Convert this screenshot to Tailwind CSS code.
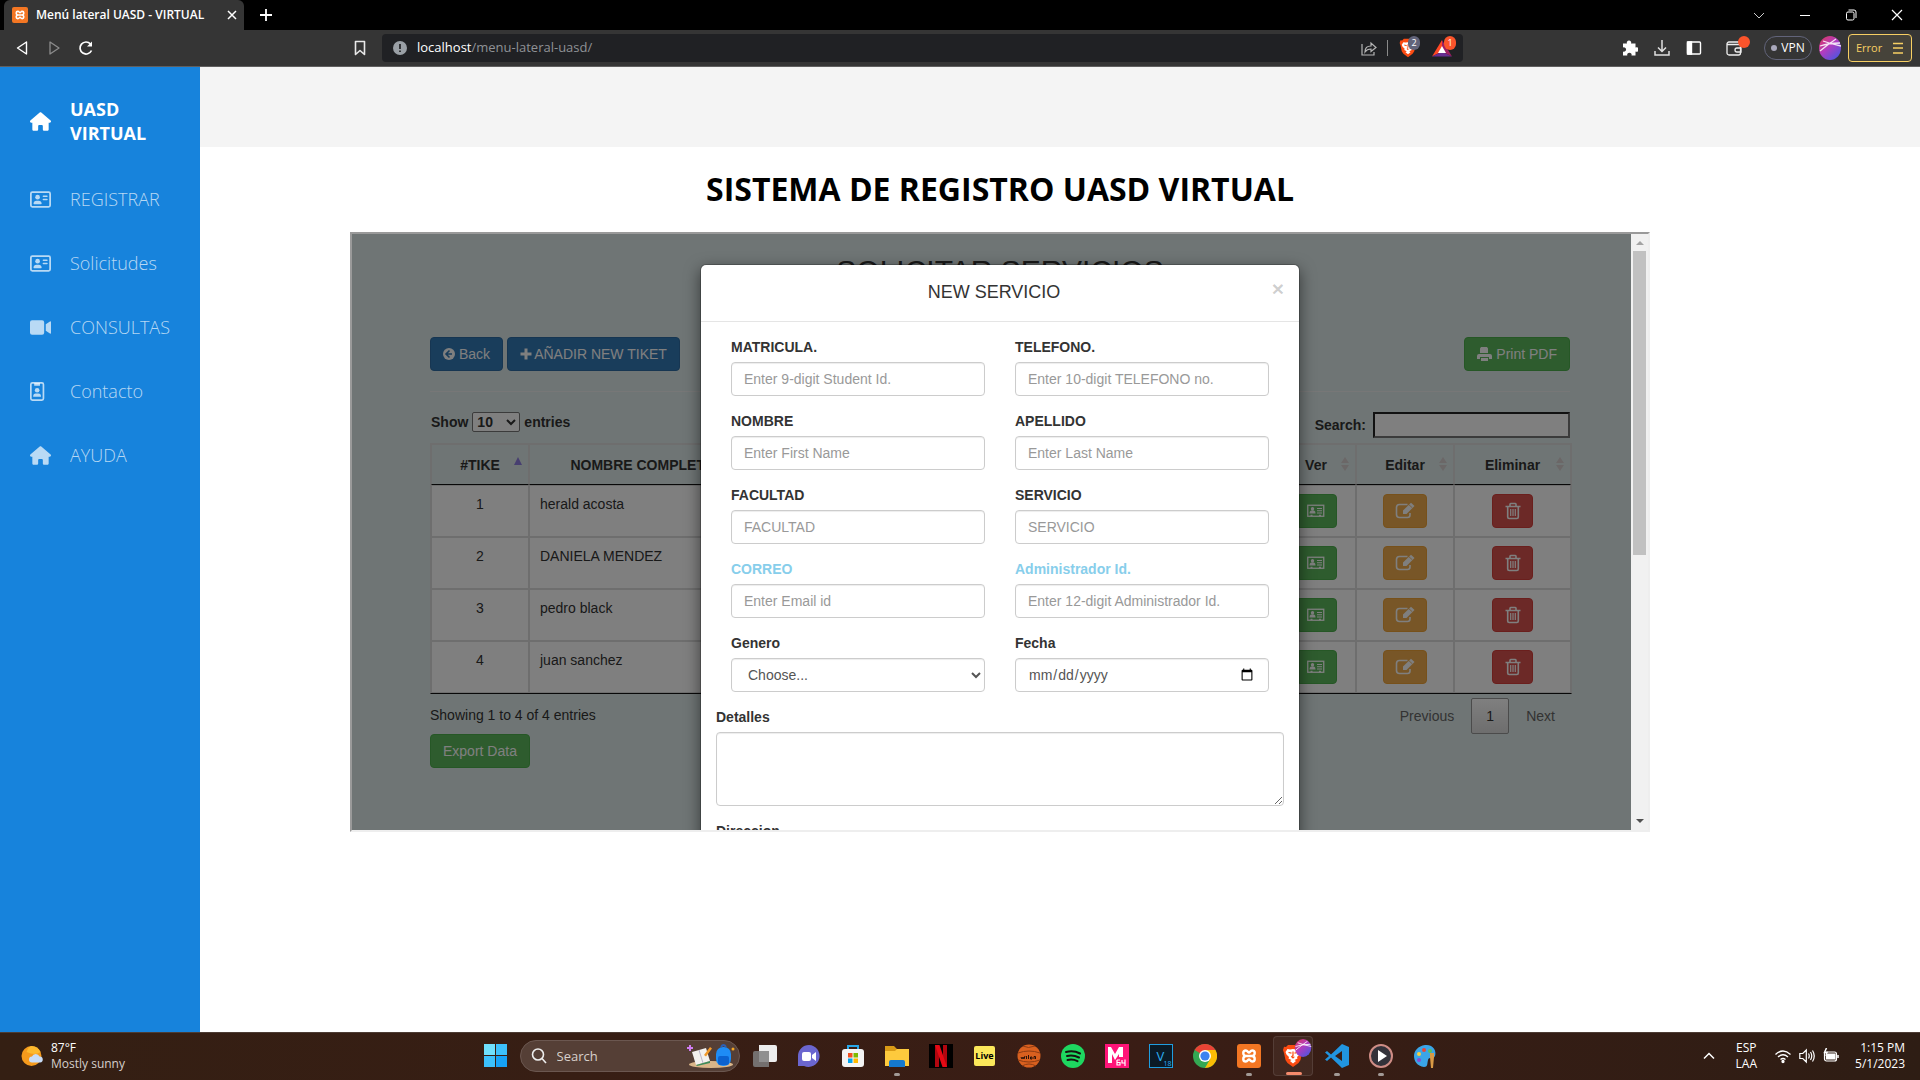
<!DOCTYPE html>
<html lang="es">
<head>
<meta charset="utf-8">
<meta name="viewport" content="width=device-width, initial-scale=1">
<title>Menú lateral UASD - VIRTUAL</title>
<script src="https://cdn.jsdelivr.net/npm/@tailwindcss/browser@4"></script>
</head>
<body class="flex min-h-screen flex-col bg-white font-['Open_Sans',sans-serif]">

<!-- Shared icon shapes -->
<svg class="absolute size-0" aria-hidden="true">
  <defs><linearGradient id="orbg" x1="0" y1="0" x2=".8" y2="1"><stop offset="0" stop-color="#e0385a"/><stop offset=".5" stop-color="#b13cc0"/><stop offset="1" stop-color="#4b56e0"/></linearGradient></defs>
  <symbol id="house" viewBox="0 0 576 512"><path fill="currentColor" d="M575.8 255.5c0 18-15 32.1-32 32.1h-32l.7 160.2c0 2.7-.2 5.4-.5 8.1V472c0 22.100-17.900 40-40 40H456c-1.100 0-2.200 0-3.300-.1c-1.400 .1-2.800 .1-4.200 .1H416 392c-22.100 0-40-17.900-40-40V448 384c0-17.700-14.300-32-32-32H256c-17.700 0-32 14.300-32 32v64 24c0 22.100-17.900 40-40 40H160 128.100c-1.500 0-3-.1-4.500-.2c-1.200 .1-2.400 .2-3.600 .2H104c-22.100 0-40-17.900-40-40V360c0-.9 0-1.900 .1-2.800V287.600H32c-18 0-32-14-32-32.100c0-9 3-17 10-24L266.400 8c7-7 15-8 22-8s15 2 21 7L564.800 231.500c8 7 12 15 11 24z"/></symbol>
  <symbol id="idcard" viewBox="0 0 576 512"><rect x="24" y="56" width="528" height="400" rx="40" fill="none" stroke="currentColor" stroke-width="48"/><circle cx="208" cy="192" r="64" fill="currentColor"/><path fill="currentColor" d="M96 364c0-44 36-76 80-76h64c44 0 80 32 80 76 0 10-8 20-18 20H114c-10 0-18-10-18-20zM368 144h96a22 22 0 0 1 0 44h-96a22 22 0 0 1 0-44zM368 232h96a22 22 0 0 1 0 44h-96a22 22 0 0 1 0-44z"/></symbol>
  <symbol id="xampp" viewBox="0 0 24 24"><rect width="24" height="24" rx="3" fill="#f37623"/><path d="M8.500 12c-3-1-3-5.500.3-5.500 2 0 2 2 3.200 2s1.200-2 3.200-2c3.300 0 3.300 4.500.3 5.500 3 1 3 5.500-.3 5.500-2 0-2-2-3.200-2s-1.200 2-3.200 2c-3.300 0-3.300-4.500-.3-5.500zM9 12h6" fill="none" stroke="#fff" stroke-width="2.400" stroke-linejoin="round"/></symbol>
  <symbol id="brave" viewBox="0 0 24 24"><path d="M7 1h10l2 2 2-.2 1 3.200-1 3-1.500 7-2 3L12 23l-5.500-4-2-3L3 9 2 6l1-3.200L5 3z" fill="#fb4b12"/><path d="M6.500 5l2.500.5L12 5l3 .5 2.500-.5 2 3-1 2.500L16 13l.5 1.500-3 1.500 1.500 1-3 2.500L9 17l1.500-1-3-1.500L8 13l-2.500-2.500-1-2.500z" fill="#fff"/><path d="M7.500 8.500l3 .7M16.500 8.500l-3 .7M12 7.500v4l-1.300 1.200L12 14l1.300-1.300" fill="none" stroke="#fb4b12" stroke-width="1.200"/></symbol>
  <symbol id="orb" viewBox="0 0 22 24"><ellipse cx="11" cy="12" rx="11" ry="12" fill="url(#orbg)"/><path d="M1 15Q8 9 17 3M4 5q8 3 18 5M1 10q9-3 20-3" stroke="#fff" stroke-width="1.300" fill="none" opacity=".85"/></symbol>
  <symbol id="vcard" viewBox="0 0 18 14"><rect x=".75" y="1.250" width="16" height="11" fill="none" stroke="currentColor" stroke-width="1.300"/><circle cx="5.500" cy="4.800" r="1.700" fill="currentColor"/><path d="M2.500 9.500q0-3.200 3-3.200t3 3.200zM10 4h5v1h-5zM10 6.300h5v1h-5zM10 8.600h5v1h-5zM3.500 10.800h2v1.500h-2zM12 10.800h2v1.500h-2z" fill="currentColor"/></symbol>
  <symbol id="edit" viewBox="0 0 20 18"><path d="M12.500 2.500H4.500Q1.500 2.500 1.500 5.500v7Q1.500 15.500 4.500 15.500h8q2.500 0 2.500-2.500v-2" fill="none" stroke="currentColor" stroke-width="1.600"/><path d="M8 8.500L16 .8l3.500 3.200-8 8H8z" fill="currentColor"/><path d="M14 2.800l3.300 3" stroke="#f0ad4e" stroke-width=".8"/></symbol>
  <symbol id="trash" viewBox="0 0 16 18"><path d="M.5 4.500h15M5 4V2.200q0-.7.7-.7h4.600q.7 0 .7.700V4M2.700 4.500V15q0 1.500 1.500 1.500h7.600q1.500 0 1.500-1.500V4.500" fill="none" stroke="currentColor" stroke-width="1.600"/><path d="M5.700 7v7M8 7v7M10.300 7v7" stroke="currentColor" stroke-width="1.200"/></symbol>
  <symbol id="sort" viewBox="0 0 8 14"><path d="M0 6l4-6 4 6zM0 8h8l-4 6z" fill="currentColor"/></symbol>
</svg>

<!-- Browser window -->
<header class="text-white">
  <div class="flex h-[30px] items-center bg-black pl-1">
    <div class="flex h-full w-60 items-center rounded-t-md bg-[#353535] pr-1.5 pl-2">
      <svg class="size-4"><use href="#xampp"/></svg>
      <span class="ml-2 flex-1 text-xs font-semibold whitespace-nowrap">Menú lateral UASD - VIRTUAL</span>
      <button class="grid size-3" aria-label="Cerrar pestaña"><svg viewBox="0 0 12 12" stroke="#fff" stroke-width="1.500"><path d="M2 2l8 8M10 2l-8 8"/></svg></button>
    </div>
    <button class="ml-4 size-3" aria-label="Nueva pestaña"><svg viewBox="0 0 12 12" stroke="#fff" stroke-width="1.800"><path d="M6 0v12M0 6h12"/></svg></button>
    <div class="ml-auto flex h-full items-center gap-[34px] pr-[17px]">
      <button class="size-3" aria-label="Buscar pestañas"><svg viewBox="0 0 12 12" fill="none" stroke="#ccc"><path d="M1 4l5 5 5-5"/></svg></button>
      <button class="size-3" aria-label="Minimizar"><svg viewBox="0 0 12 12" stroke="#fff"><path d="M1 6.500h10"/></svg></button>
      <button class="size-3" aria-label="Restaurar"><svg viewBox="0 0 12 12" fill="none" stroke="#fff"><rect x="1.500" y="3" width="7.500" height="8" rx="1.500"/><path d="M3.500 1h5.500q2 0 2 2v6"/></svg></button>
      <button class="size-3" aria-label="Cerrar"><svg viewBox="0 0 12 12" stroke="#fff" stroke-width="1.200"><path d="M1 1l10 10M11 1L1 11"/></svg></button>
    </div>
  </div>
  <div class="flex h-[37px] items-center border-b border-[#605f5f] bg-[#353535] pr-2 pl-3.5">
    <nav class="flex gap-4" aria-label="Navegación">
      <button class="size-4" aria-label="Atrás"><svg viewBox="0 0 16 16" fill="none" stroke="#fff" stroke-width="1.400"><path d="M12.500 2v12L3.500 8z" stroke-linejoin="round"/></svg></button>
      <button class="size-4" aria-label="Adelante"><svg viewBox="0 0 16 16" fill="none" stroke="#8c8c8c" stroke-width="1.300"><path d="M4 2v12l9-6z" stroke-linejoin="round"/></svg></button>
      <button class="size-4" aria-label="Recargar"><svg viewBox="0 0 16 16" fill="none" stroke="#fff" stroke-width="1.700"><path d="M13.500 10.500A6 6 0 1 1 12.500 4"/><path d="M14 1.500v5H9z" fill="#fff" stroke="none"/></svg></button>
    </nav>
    <button class="ml-[258px] size-4" aria-label="Marcador"><svg viewBox="0 0 16 16" fill="none" stroke="#e8e8e8" stroke-width="1.600"><path d="M3.500 1.500h9v13L8 10.500l-4.500 4z" stroke-linejoin="round"/></svg></button>
    <div class="ml-3.5 flex h-7 flex-1 items-center rounded bg-[#202124] pr-[11px] pl-[11px]">
      <svg class="size-3.5" viewBox="0 0 14 14"><circle cx="7" cy="7" r="7" fill="#9aa0a6"/><path d="M7 3v5M7 9.500v1.500" stroke="#202124" stroke-width="1.700"/></svg>
      <p class="ml-2.5 flex-1 text-[13px] text-[#8f9296]"><span class="text-white">localhost</span>/menu-lateral-uasd/</p>
      <svg class="size-4" viewBox="0 0 16 16" fill="none" stroke="#b5b5b5" stroke-width="1.200"><path d="M1 4v11h12v-3"/><path d="M4 12q0-6 6-6V3l5 4.500-5 4V9q-4 0-6 3z"/></svg>
      <span class="mx-2.5 h-4 w-px bg-[#8a8a8a]"></span>
      <div class="relative size-5"><svg class="size-5"><use href="#brave"/></svg><span class="absolute -top-0.5 left-2.5 grid h-3.5 w-3 place-items-center rounded-full bg-[#62647a] text-[9px]">2</span></div>
      <div class="relative ml-3.5 size-5"><svg class="size-5" viewBox="0 0 20 20"><path d="M10 2L0 18.500l10-5z" fill="#ff4724"/><path d="M0 18.500h20l-10-5z" fill="#662d91"/><path d="M10 2l10 16.500-10-5z" fill="#9e1f63"/><path d="M10 8l4 7H6z" fill="#fff"/></svg><span class="absolute -top-0.5 left-3 grid h-3.5 w-3 place-items-center rounded-full bg-[#fb542b] text-[9px]">1</span></div>
    </div>
    <div class="ml-[159px] flex items-center">
      <svg class="size-4" viewBox="0 0 16 16"><path d="M1 3.500h4a2.200 2.200 0 1 1 4 0h4.500v4a2.300 2.300 0 1 1 0 4V15.500H9.500a2.200 2.200 0 1 0-4.200 0H1v-4a2.200 2.200 0 1 0 0-4z" fill="#fff"/></svg>
      <svg class="ml-4 size-4" viewBox="0 0 16 16" fill="none" stroke="#e0e0e0" stroke-width="1.500"><path d="M8 0v11M4 7.500l4 4 4-4M1 11v4h14v-4"/></svg>
      <svg class="ml-4 size-4" viewBox="0 0 16 16" fill="none" stroke="#fff" stroke-width="1.400"><rect x="1.500" y="2" width="13" height="12" rx="1"/><path d="M1.500 2h4v12h-4z" fill="#fff"/></svg>
      <div class="relative ml-6 size-4"><svg viewBox="0 0 16 16" fill="none" stroke="#eee" stroke-width="1.300"><rect x="1" y="2" width="13.500" height="13" rx="2"/><path d="M1 4.500h13M15 8h-4a2 2 0 0 0 0 4h4z"/></svg><span class="absolute -top-1 left-3 size-3 rounded-full bg-[#fb542b]"></span></div>
      <button class="ml-[22px] flex h-6 w-12 items-center justify-center gap-1 rounded-full border border-[#62647a] text-xs"><span class="size-1.5 rounded-full bg-[#a9a8bb]"></span>VPN</button>
      <svg class="ml-[7px] h-6 w-[22px]"><use href="#orb"/></svg>
      <button class="ml-[7px] flex h-7 w-16 items-center justify-between rounded border border-[#f7cf63] bg-[#46433a] px-[7px] text-[11px] text-[#f7cf63]">Error<svg class="size-3" viewBox="0 0 12 12" stroke="#f7cf63" stroke-width="1.500"><path d="M1 1.500h10M1 6h10M1 11h10"/></svg></button>
    </div>
  </div>
</header>

<!-- Web page -->
<div class="flex flex-1">
  <aside class="w-[200px] shrink-0 bg-[#1783dc] text-lg leading-6 text-white">
    <a href="#" class="flex h-[108px] items-center pl-[30px] font-bold">
      <svg class="mr-[19px] h-[19px] w-[21px]"><use href="#house"/></svg><span class="w-[90px]">UASD VIRTUAL</span>
    </a>
    <nav class="font-light text-white/70">
      <a href="#" class="flex h-12 items-center pl-[30px]"><svg class="mr-[19px] h-[19px] w-[21px]"><use href="#idcard"/></svg>REGISTRAR</a>
      <a href="#" class="mt-4 flex h-12 items-center pl-[30px]"><svg class="mr-[19px] h-[19px] w-[21px]"><use href="#idcard"/></svg>Solicitudes</a>
      <a href="#" class="mt-4 flex h-12 items-center pl-[30px]"><svg class="mr-[19px] h-[19px] w-[21px]" viewBox="0 0 20 18"><path fill="currentColor" d="M2 2h9.500q2 0 2 2v10q0 2-2 2H2q-2 0-2-2V4q0-2 2-2zM15 6l4-2.700q1-.5 1 .7v10q0 1.200-1 .7l-4-2.700z"/></svg>CONSULTAS</a>
      <a href="#" class="mt-4 flex h-12 items-center pl-[30px]"><svg class="mr-[19px] h-[19px] w-[21px]" viewBox="0 0 20 18"><rect x=".8" y=".8" width="12" height="16.400" rx="1.500" fill="none" stroke="currentColor" stroke-width="1.600"/><path fill="currentColor" d="M4 1h5.500v2.500H4zM3 14q0-3 2.500-3h2.500q2.500 0 2.500 3z"/><circle cx="6.800" cy="7.800" r="2.200" fill="currentColor"/></svg>Contacto</a>
      <a href="#" class="mt-4 flex h-12 items-center pl-[30px]"><svg class="mr-[19px] h-[19px] w-[21px]"><use href="#house"/></svg>AYUDA</a>
    </nav>
  </aside>

  <main class="min-w-0 flex-1">
    <div class="h-20 bg-[#f4f4f4]"></div>
    <div class="pr-[120px]">
    <h1 class="mt-5 text-center text-[32px] leading-[44px] font-bold text-black">SISTEMA DE REGISTRO UASD VIRTUAL</h1>

    <section class="relative mx-auto mt-[21px] h-[600px] w-[1300px] max-w-full overflow-hidden border-2 border-t-[#9a9a9a] border-r-[#eee] border-b-[#eee] border-l-[#9a9a9a] bg-[#dfebea] font-['Liberation_Sans',Arial,sans-serif] text-sm leading-5 text-[#333]">
      <div class="mx-auto w-[1140px] pt-5">
        <h2 class="text-center text-[30px] leading-[33px] font-medium">SOLICITAR SERVICIOS</h2>
        <div class="mt-[50px] flex gap-1 text-white">
          <button class="flex h-[34px] items-center gap-1 rounded border border-[#2e6da4] bg-[#337ab7] px-3"><svg class="size-3" viewBox="0 0 12 12"><circle cx="6" cy="6" r="6" fill="currentColor"/><path d="M6.500 2.500L3 6l3.500 3.500M3.500 6H9" fill="none" stroke="#337ab7" stroke-width="1.600"/></svg>Back</button>
          <button class="flex h-[34px] items-center gap-0.5 rounded border border-[#2e6da4] bg-[#337ab7] px-3"><svg class="size-3" viewBox="0 0 12 12"><path d="M6 .5v11M.5 6h11" stroke="currentColor" stroke-width="3"/></svg>AÑADIR NEW TIKET</button>
          <button class="ml-auto flex h-[34px] items-center gap-1 rounded border border-[#4cae4c] bg-[#5cb85c] px-3"><svg class="h-3.5 w-[15px]" viewBox="0 0 15 14" fill="currentColor"><path d="M4 0h6l1 1.500V6H3V1.500zM2 7h11q2 0 2 2v3h-3v-2H3v2H0V9q0-2 2-2zM4 11h7v3H4z"/></svg>Print PDF</button>
        </div>
        <hr class="my-5 border-[#eee]">
        <div class="flex items-start justify-between pl-px font-bold">
          <label class="flex items-center gap-1">Show
            <select class="h-5 w-12 rounded-xs border border-[#767676] bg-white font-bold"><option>10</option></select>
            entries</label>
          <label class="flex items-center gap-[7px]">Search:<input type="search" class="h-[26px] w-[197px] border-2 border-[#767676] border-t-[#222] border-l-[#222] bg-white"></label>
        </div>

        <table class="mt-[5px] w-[calc(100%+2px)] table-fixed border-separate border-spacing-0 border border-[#ddd] border-b-[#111] [&_td]:h-[52px] [&_td]:border [&_td]:border-[#ddd] [&_td]:bg-white [&_td]:p-2 [&_td]:align-top [&_th]:relative [&_th]:h-[41px] [&_th]:border [&_th]:border-[#ddd] [&_th]:border-b-[#111]">
          <colgroup><col class="w-[98px]"><col class="w-[228px]"><col><col class="w-20"><col class="w-[98px]"><col class="w-[117px]"></colgroup>
          <thead><tr>
            <th>#TIKE<svg class="absolute top-3 right-[5px] h-2 w-2.5" viewBox="0 0 10 8"><path d="M1 8l4-8 4 8z" fill="#8f7fe0"/></svg></th>
            <th>NOMBRE COMPLETO</th><th></th>
            <th>Ver<svg class="absolute top-3 right-1.5 h-3.5 w-2 text-[#d6cfcf]"><use href="#sort"/></svg></th>
            <th>Editar<svg class="absolute top-3 right-1.5 h-3.5 w-2 text-[#d6cfcf]"><use href="#sort"/></svg></th>
            <th>Eliminar<svg class="absolute top-3 right-1.5 h-3.5 w-2 text-[#d6cfcf]"><use href="#sort"/></svg></th>
          </tr></thead>
          <tbody>
            <tr><td class="text-center">1</td><td><span class="pl-0.5">herald acosta</span></td><td></td>
              <td><button aria-label="Ver" class="mx-auto grid h-[34px] w-[41px] place-items-center rounded border border-[#4cae4c] bg-[#5cb85c] text-white"><svg class="h-3.5 w-[18px]"><use href="#vcard"/></svg></button></td>
              <td><button aria-label="Editar" class="mx-auto grid h-[34px] w-11 place-items-center rounded border border-[#eea236] bg-[#f0ad4e] text-white"><svg class="h-[18px] w-5"><use href="#edit"/></svg></button></td>
              <td><button aria-label="Eliminar" class="mx-auto grid h-[34px] w-[41px] place-items-center rounded border border-[#d43f3a] bg-[#d9534f] text-white"><svg class="h-[18px] w-4"><use href="#trash"/></svg></button></td></tr>
            <tr><td class="text-center">2</td><td><span class="pl-0.5">DANIELA MENDEZ</span></td><td></td>
              <td><button aria-label="Ver" class="mx-auto grid h-[34px] w-[41px] place-items-center rounded border border-[#4cae4c] bg-[#5cb85c] text-white"><svg class="h-3.5 w-[18px]"><use href="#vcard"/></svg></button></td>
              <td><button aria-label="Editar" class="mx-auto grid h-[34px] w-11 place-items-center rounded border border-[#eea236] bg-[#f0ad4e] text-white"><svg class="h-[18px] w-5"><use href="#edit"/></svg></button></td>
              <td><button aria-label="Eliminar" class="mx-auto grid h-[34px] w-[41px] place-items-center rounded border border-[#d43f3a] bg-[#d9534f] text-white"><svg class="h-[18px] w-4"><use href="#trash"/></svg></button></td></tr>
            <tr><td class="text-center">3</td><td><span class="pl-0.5">pedro black</span></td><td></td>
              <td><button aria-label="Ver" class="mx-auto grid h-[34px] w-[41px] place-items-center rounded border border-[#4cae4c] bg-[#5cb85c] text-white"><svg class="h-3.5 w-[18px]"><use href="#vcard"/></svg></button></td>
              <td><button aria-label="Editar" class="mx-auto grid h-[34px] w-11 place-items-center rounded border border-[#eea236] bg-[#f0ad4e] text-white"><svg class="h-[18px] w-5"><use href="#edit"/></svg></button></td>
              <td><button aria-label="Eliminar" class="mx-auto grid h-[34px] w-[41px] place-items-center rounded border border-[#d43f3a] bg-[#d9534f] text-white"><svg class="h-[18px] w-4"><use href="#trash"/></svg></button></td></tr>
            <tr><td class="text-center">4</td><td><span class="pl-0.5">juan sanchez</span></td><td></td>
              <td><button aria-label="Ver" class="mx-auto grid h-[34px] w-[41px] place-items-center rounded border border-[#4cae4c] bg-[#5cb85c] text-white"><svg class="h-3.5 w-[18px]"><use href="#vcard"/></svg></button></td>
              <td><button aria-label="Editar" class="mx-auto grid h-[34px] w-11 place-items-center rounded border border-[#eea236] bg-[#f0ad4e] text-white"><svg class="h-[18px] w-5"><use href="#edit"/></svg></button></td>
              <td><button aria-label="Eliminar" class="mx-auto grid h-[34px] w-[41px] place-items-center rounded border border-[#d43f3a] bg-[#d9534f] text-white"><svg class="h-[18px] w-4"><use href="#trash"/></svg></button></td></tr>
          </tbody>
        </table>

        <div class="flex h-10 items-start justify-between pt-1">
          <p class="pt-[7px]">Showing 1 to 4 of 4 entries</p>
          <div class="flex gap-0.5 text-[#666]">
            <button class="h-9 px-[15px]">Previous</button>
            <button class="h-9 w-[38px] rounded-xs border border-[#979797] bg-linear-to-b from-white to-[#dcdcdc] text-[#333]">1</button>
            <button class="h-9 px-[15px]">Next</button>
          </div>
        </div>
        <button class="h-[34px] rounded border border-[#4cae4c] bg-[#5cb85c] px-3 text-white">Export Data</button>
      </div>

      <!-- Backdrop and dialog -->
      <div class="absolute inset-0 bg-black/50"></div>
      <div class="absolute inset-x-0 top-[30px] mx-auto w-[600px] rounded-md border border-black/20 bg-white bg-clip-padding shadow-[0_5px_15px_rgba(0,0,0,0.5)]" role="dialog" aria-labelledby="dlg-title">
        <div class="relative h-[57px] border-b border-[#e5e5e5] pt-3.5">
          <h4 id="dlg-title" class="pr-3 text-center text-lg leading-[26px] font-medium">NEW SERVICIO</h4>
          <button class="absolute top-[13px] right-[15px] text-[21px] leading-[21px] font-bold text-black/20" aria-label="Close">×</button>
        </div>
        <form class="p-[15px] [&_input]:h-[34px] [&_input]:w-full [&_input]:rounded [&_input]:border [&_input]:border-[#ccc] [&_input]:px-3 [&_input]:text-[#555] [&_input]:shadow-[inset_0_1px_1px_rgba(0,0,0,0.075)] [&_input]:placeholder:text-[#999] [&_label]:mb-[5px] [&_label]:block [&_label]:font-bold">
          <div class="grid grid-cols-2 gap-x-[30px] gap-y-[15px] px-[15px]">
            <div><label for="f1">MATRICULA.</label><input id="f1" type="text" placeholder="Enter 9-digit Student Id."></div>
            <div><label for="f2">TELEFONO.</label><input id="f2" type="text" placeholder="Enter 10-digit TELEFONO no."></div>
            <div><label for="f3">NOMBRE</label><input id="f3" type="text" placeholder="Enter First Name"></div>
            <div><label for="f4">APELLIDO</label><input id="f4" type="text" placeholder="Enter Last Name"></div>
            <div><label for="f5">FACULTAD</label><input id="f5" type="text" placeholder="FACULTAD"></div>
            <div><label for="f6">SERVICIO</label><input id="f6" type="text" placeholder="SERVICIO"></div>
            <div><label for="f7" class="text-[#87ceeb]">CORREO</label><input id="f7" type="email" placeholder="Enter Email id"></div>
            <div><label for="f8" class="text-[#87ceeb]">Administrador Id.</label><input id="f8" type="text" placeholder="Enter 12-digit Administrador Id."></div>
            <div><label for="f9">Genero</label><select id="f9" class="h-[34px] w-full rounded border border-[#ccc] bg-white px-3 text-[#555] shadow-[inset_0_1px_1px_rgba(0,0,0,0.075)]"><option>Choose...</option></select></div>
            <div><label for="f10">Fecha</label><input id="f10" type="date"></div>
          </div>
          <div class="mt-[15px]"><label for="f11">Detalles</label><textarea id="f11" class="block h-[74px] w-full resize rounded border border-[#ccc] px-3 py-1.5 shadow-[inset_0_1px_1px_rgba(0,0,0,0.075)]"></textarea></div>
          <div class="mt-[15px]"><label for="f12">Direccion</label><input id="f12" type="text"></div>
        </form>
      </div>

      <!-- Scroll bar of the frame -->
      <div class="absolute inset-y-0 right-0 flex w-[17px] flex-col items-center bg-[#f1f1f1]" aria-hidden="true">
        <svg class="h-[17px] w-2" viewBox="0 0 8 17"><path d="M0 11l4-4 4 4z" fill="#a3a3a3"/></svg>
        <span class="h-[304px] w-[13px] bg-[#c1c1c1]"></span>
        <svg class="mt-auto h-[17px] w-2" viewBox="0 0 8 17"><path d="M0 6h8l-4 4z" fill="#505050"/></svg>
      </div>
    </section>
    </div>
  </main>
</div>

<!-- Desktop taskbar -->
<footer class="grid h-12 grid-cols-[1fr_auto_1fr] items-center border-t border-[#4d3c34] bg-linear-to-r from-[#341f13] via-[#3a1d15] via-60% to-[#2e1d14] pb-0.5 text-xs leading-4 text-white">
  <div class="flex items-center gap-2 pl-[21px]">
    <svg class="size-[22px]" viewBox="0 0 22 22"><circle cx="10.500" cy="11" r="10" fill="#f59a1c"/><path d="M10.500 1a10 10 0 0 1 9 6q-5 4-14 0 2-6 5-6z" fill="#fdb92e"/><path d="M11 17.500a3 3 0 0 1 0-6 4 4 0 0 1 7.500 0 3 3 0 0 1 .5 6z" fill="#c9ddf8"/></svg>
    <p>87°F<br><span class="text-[#d5cfcc]">Mostly sunny</span></p>
  </div>
  <div class="ml-2.5 flex items-center">
    <button class="mr-[13px] size-[23px]" aria-label="Inicio"><svg viewBox="0 0 23 23" fill="#3cc0fb"><path d="M0 0h11v11H0z" fill="#6fe0fd"/><path d="M12 0h11v11H12zM0 12h11v11H0z"/><path d="M12 12h11v11H12z" fill="#16a2f6"/></svg></button>
    <label class="flex h-8 w-[220px] items-center rounded-full border border-[#6b5750] bg-[#553f36] pr-1 pl-2.5">
      <svg class="size-4 shrink-0" viewBox="0 0 16 16" fill="none" stroke="#eee" stroke-width="1.600"><circle cx="7" cy="6.500" r="5.500"/><path d="M11 10.500l4 4.500"/></svg>
      <input type="text" placeholder="Search" aria-label="Search" class="ml-2.5 w-full min-w-0 bg-transparent text-[13px] placeholder:text-[#d8d0cc]">
      <svg class="h-6 w-12 shrink-0" viewBox="0 0 48 24"><ellipse cx="24" cy="20.500" rx="22" ry="3.500" fill="#dbb689"/><path d="M5 8l14-4 4 13-14 4z" fill="#f3f1ee"/><path d="M12 6l4 13" stroke="#b9b4c8"/><path d="M9 21l14-4v2L10 22z" fill="#3d8b5a"/><path d="M17 11l6-8 2 1.500-6 8z" fill="#f19a2b"/><path d="M3 1v6M0 4h6" stroke="#d07df2" stroke-width="2"/><rect x="29" y="3" width="15" height="19" rx="7" fill="#1e8cf5"/><rect x="31" y="12" width="11" height="9" rx="2" fill="#0b62d0"/><path d="M34 3q2.500-4 5 0" stroke="#2c5fb5" stroke-width="2" fill="none"/><circle cx="46" cy="5" r="1.500" fill="#f5a623"/></svg>
    </label>
    <div class="ml-[3px] grid h-11 auto-cols-[44px] grid-flow-col place-items-center [&>span]:relative [&>span>svg]:size-6">
      <span><svg viewBox="0 0 24 24"><path d="M6 1h16q2 0 2 2v13q0 2-2 2H6z" fill="#ededed"/><path d="M2 7h14v16H2q-2 0-2-2V9q0-2 2-2z" fill="#7f7f7f" opacity=".85"/></svg></span>
      <span><svg viewBox="0 0 24 24"><path d="M12 1a11 11 0 1 1-5 21H1V12A11 11 0 0 1 12 1z" fill="#6b66cf"/><rect x="5" y="8" width="9" height="9" rx="2" fill="#fff"/><path d="M15 11l4-3v9l-4-3z" fill="#fff"/></svg></span>
      <span><svg viewBox="0 0 24 24"><path d="M7 6V2h10v4" fill="none" stroke="#28a8ea" stroke-width="2"/><rect x="1" y="5" width="22" height="18" rx="3" fill="#f4f4f4"/><path d="M7 9h4.500v4.500H7z" fill="#f25022"/><path d="M12.500 9H17v4.500h-4.500z" fill="#7fba00"/><path d="M7 14.500h4.500V19H7z" fill="#00a4ef"/><path d="M12.500 14.500H17V19h-4.500z" fill="#ffb900"/></svg></span>
      <span><svg viewBox="0 0 24 24"><path d="M0 2h9l3 3h12v8H0z" fill="#d99b16"/><path d="M0 7h10l2-2h12v17H0z" fill="#fdca3d"/><path d="M4 23v-5q0-2 2-2h12q2 0 2 2v5z" fill="#1479cf"/></svg><i class="absolute -bottom-2 left-[9px] h-[3px] w-1.5 rounded-full bg-[#a29a96]"></i></span>
      <span><svg viewBox="0 0 24 24"><path d="M0 0h24v24H0z"/><path d="M6 1h4v22H6zM14 1h4v22h-4z" fill="#b1060f"/><path d="M6 1h4.500L18 23h-4.500z" fill="#e50914"/></svg></span>
      <span class="grid h-5 w-[21px] place-items-center rounded-xs bg-[#fbe75a] text-[9px] leading-5 font-bold text-black">Live</span>
      <span><svg viewBox="0 0 24 24"><circle cx="12" cy="12" r="11.500" fill="#d9601f"/><path d="M1 9q11-4 22 0M1 16q11 4 22 0M6 2q5 3 12 0M5 22q7-4 14 0" fill="none" stroke="#8d3c14" stroke-width="1"/><path d="M4 13l1 2 1-2 1 2 1-3M9.500 12v3M11.500 11v4M13.500 13v2h1.500v-2zM17 15v-2.500h1.500V15" fill="none" stroke="#2b1209" stroke-width="1"/></svg></span>
      <span><svg viewBox="0 0 24 24"><circle cx="12" cy="12" r="12" fill="#1ed760"/><path d="M5 8q7.500-2 14 1.500M6 12q6-1.500 12 1.500M6.500 16q5.500-1.200 10 1.200" fill="none" stroke="#16120f" stroke-width="2" stroke-linecap="round"/></svg></span>
      <span><svg viewBox="0 0 24 24"><path d="M0 0h24v24H0z" fill="#ff1478"/><path d="M3 19V3h3l4 7 4-7h4v10h-4v-3l-4 6-3-6v9z" fill="#fff"/><path d="M12 16h3M12 16v5h3v-2.500h-3M17 16v3h3M20 15.500V22" fill="none" stroke="#fff" stroke-width="1.200"/></svg></span>
      <span class="grid size-6 place-items-center border border-[#1f9de0] bg-[#0b1a26] text-[13px] text-[#2bb0f5]">V<small class="absolute right-0 bottom-0 text-[7px] leading-[7px]">18</small></span>
      <span><svg viewBox="0 0 24 24"><circle cx="12" cy="12" r="12" fill="#34a853"/><path d="M12 12L1.600 6A12 12 0 0 1 22.400 6z" fill="#ea4335"/><path d="M22.400 6H12l5.200 9L12 24A12 12 0 0 0 22.400 6z" fill="#fbbc05"/><circle cx="12" cy="12" r="6" fill="#fff"/><circle cx="12" cy="12" r="4.600" fill="#3b82f0"/></svg></span>
      <span><svg><use href="#xampp"/></svg><i class="absolute -bottom-2 left-[9px] h-[3px] w-1.5 rounded-full bg-[#a29a96]"></i></span>
      <span class="grid h-10 w-10 place-items-center rounded border border-white/10 bg-white/5"><svg><use href="#brave"/></svg><svg class="absolute top-0.5 right-0 !size-[18px]"><use href="#orb"/></svg><i class="absolute bottom-0 left-3 h-[3px] w-4 rounded-full bg-[#f58a6c]"></i></span>
      <span><svg viewBox="0 0 24 24"><path d="M17 0l7 3v18l-7 3L6 13.500 2 17l-2-1.500L4 12 0 8.500 2 7l4 3.500zM17 7l-7 5 7 5z" fill="#2195e0" fill-rule="evenodd"/></svg><i class="absolute -bottom-2 left-[9px] h-[3px] w-1.5 rounded-full bg-[#a29a96]"></i></span>
      <span><svg viewBox="0 0 24 24"><circle cx="12" cy="12" r="11" fill="#33323a" stroke="#cf8d86" stroke-width="2"/><path d="M9 6l9 6-9 6z" fill="#fff"/></svg><i class="absolute -bottom-2 left-[9px] h-[3px] w-1.5 rounded-full bg-[#a29a96]"></i></span>
      <span><svg viewBox="0 0 24 24"><path d="M12 1C20 0 24 7 22 12c-2 4-6 0-7 4s0 7-4 7C4 22 1 17 1 12S5 2 12 1z" fill="#3aa5e8"/><circle cx="6" cy="10" r="2" fill="#f5d040"/><circle cx="11" cy="6" r="2" fill="#e8463a"/><circle cx="17" cy="7" r="2" fill="#5cc05c"/><circle cx="6" cy="16" r="2" fill="#8a4bd0"/><path d="M17 9h4v4l-1 11h-2l-1-11z" fill="#d99a45"/></svg></span>
    </div>
  </div>
  <div class="flex items-center justify-end pr-[15px]">
    <svg class="mr-[21px] size-3" viewBox="0 0 12 12" fill="none" stroke="#fff" stroke-width="1.500"><path d="M1 8.500l5-5 5 5"/></svg>
    <p class="mr-[18px] text-center">ESP<br>LAA</p>
    <svg class="mr-2 size-4" viewBox="0 0 16 16" fill="none" stroke="#fff" stroke-width="1.300"><path d="M.5 6.500q7.500-7 15 0M3 9q5-4.500 10 0M5.500 11.500q2.500-2 5 0"/><circle cx="8" cy="13.500" r="1" fill="#fff"/></svg>
    <svg class="mr-2 size-4" viewBox="0 0 16 16" fill="none" stroke="#fff" stroke-width="1.200"><path d="M.8 5.500h3l3.500-3.500v12l-3.500-3.500h-3zM9.500 5.500q1.500 2.500 0 5M11.500 4q2.500 4 0 8M13.500 2.500q3.500 5.500 0 11"/></svg>
    <svg class="mr-4 size-4" viewBox="0 0 16 16" fill="none" stroke="#fff" stroke-width="1.200"><rect x="1.500" y="4" width="12" height="9" rx="2"/><path d="M5 6h7v5H3.500V8z" fill="#fff"/><path d="M15 7v3M3.500 0L1.500 4.500H4L3 8" stroke-width="1.500"/></svg>
    <p class="text-right">1:15 PM<br>5/1/2023</p>
  </div>
</footer>
</body>
</html>
